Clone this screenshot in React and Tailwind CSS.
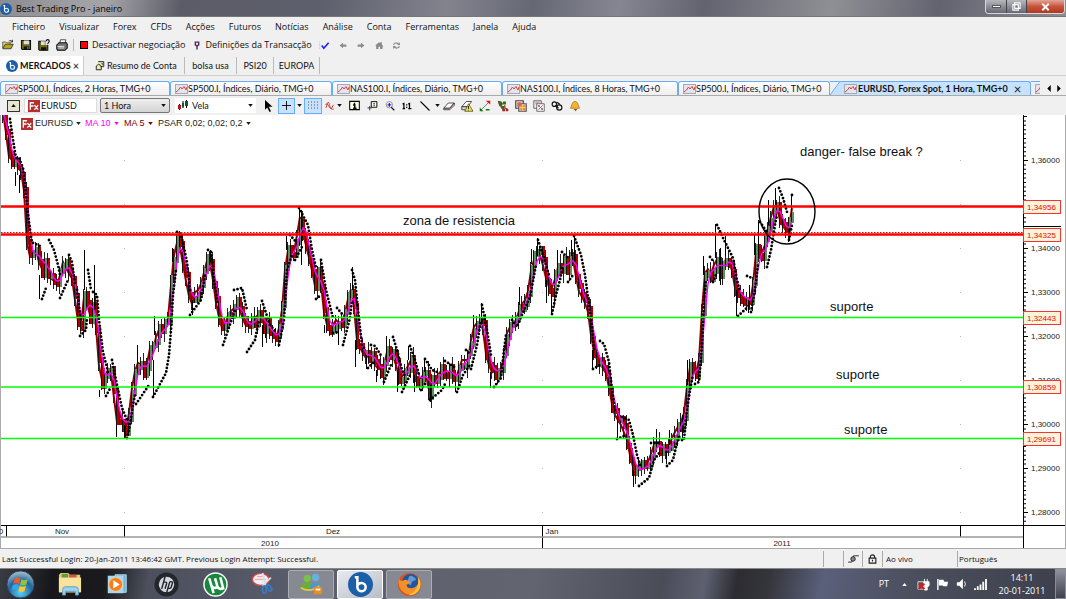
import React, { useState } from 'react';

const menuItems = ['Ficheiro', 'Visualizar', 'Forex', 'CFDs', 'Acções', 'Futuros', 'Notícias', 'Análise', 'Conta', 'Ferramentas', 'Janela', 'Ajuda'];

const chartTabs = [
  { label: 'SP500.I, Índices, 2 Horas, TMG+0', width: 'w-[170px]' },
  { label: 'SP500.I, Índices, Diário, TMG+0', width: 'w-[162px]' },
  { label: 'NAS100.I, Índices, Diário, TMG+0', width: 'w-[170px]' },
  { label: 'NAS100.I, Índices, 8 Horas, TMG+0', width: 'w-[176px]' },
  { label: 'SP500.I, Índices, Diário, TMG+0', width: 'w-[152px]' },
];

// close price path, in chart coordinates
const pricePath = [
  [2, 112], [6, 140], [9, 165], [13, 155], [17, 168], [21, 172], [24, 200], [25, 230], [27, 255], [31, 258], [36, 247], [40, 278], [43, 250], [46, 275],
  [52, 280], [57, 285], [62, 262], [67, 272], [72, 280], [76, 320], [80, 325], [84, 288], [88, 318], [92, 305], [94, 315], [97, 350],
  [99, 382], [103, 378], [108, 368], [112, 378], [114, 418], [117, 424], [120, 410], [123, 428], [126, 430], [129, 405], [132, 380], [136, 362],
  [140, 365], [144, 372], [148, 355], [150, 342], [153, 355], [156, 328], [160, 332], [165, 325], [168, 315], [171, 270], [174, 248],
  [177, 240], [180, 250], [183, 272], [187, 290], [190, 308], [194, 292], [198, 290], [202, 278], [205, 262], [208, 258], [212, 280],
  [216, 310], [221, 328], [224, 325], [228, 312], [232, 310], [237, 302], [240, 315], [246, 328], [252, 320], [258, 314], [262, 323],
  [268, 330], [276, 340], [281, 310], [284, 270], [286, 250], [290, 252], [294, 252], [296, 235], [299, 217], [302, 232], [306, 250],
  [310, 265], [314, 286], [318, 272], [321, 290], [324, 323], [330, 328], [335, 320], [340, 325], [345, 310], [349, 288], [352, 292],
  [355, 338], [360, 350], [365, 358], [370, 352], [375, 368], [382, 370], [386, 352], [391, 353], [395, 365], [399, 380], [405, 370],
  [410, 360], [414, 378], [420, 380], [424, 370], [428, 390], [434, 378], [441, 370], [448, 372], [455, 378], [461, 360], [467, 360],
  [472, 328], [476, 323], [481, 320], [484, 350], [490, 373], [496, 370], [502, 368], [505, 335], [510, 325], [515, 320], [520, 305],
  [526, 298], [531, 264], [536, 254], [540, 256], [544, 275], [549, 290], [553, 285], [556, 268], [561, 264], [566, 265], [571, 254],
  [574, 270], [577, 290], [583, 300], [588, 315], [591, 345], [595, 358], [600, 365], [606, 375], [610, 400], [614, 415], [620, 425],
  [626, 440], [630, 460], [634, 473], [638, 468], [643, 469], [648, 460], [653, 445], [657, 444], [661, 450], [666, 453], [670, 440],
  [675, 430], [680, 422], [684, 410], [687, 375], [689, 367], [693, 375], [697, 370], [699, 350], [701, 310], [703, 275], [706, 268],
  [711, 275], [715, 255], [719, 272], [726, 257], [730, 265], [735, 293], [738, 296], [744, 298], [749, 303], [752, 285], [755, 252],
  [760, 255], [764, 245], [768, 225], [772, 208], [775, 204], [778, 218], [783, 228], [787, 233], [791, 208], [793, 230],
];

const psar = [
  '10,119 13,140 16,158 19,158 23,168 26,195 29,222 32,243', '33,243 40,246', '49,240 54,250 58,265 60,275', '69,255 72,262 75,285',
  '88,270 91,290', '77,290 81,322', '42,299 46,288', '60,298 68,280', '93,292 97,295 99,320 103,352 108,372', '80,336 86,330 87,318',
  '112,360 117,385 122,408 127,420', '106,396 111,387', '127,438 130,425 133,405 135,395', '136,404 149,385',
  '153,397 166,373 169,355 171,330 173,295 176,270', '177,232 181,234 187,262 190,290', '190,315 201,300 205,275',
  '208,250 211,252 214,280 218,305', '223,345 235,310', '234,290 242,288 247,310', '247,352 255,340 259,320', '262,301 270,325 277,333',
  '279,345 284,320 287,270 292,255', '290,235 296,242', '295,260 303,245', '299,208 308,225 312,250 316,268', '321,260 326,290 333,318',
  '316,299 321,295', '337,308 343,315', '333,333 340,332', '343,345 350,318 352,300', '352,270 355,280 358,310 362,345 366,350',
  '371,345 375,346 382,357', '368,368 374,362', '384,382 391,365', '393,337 397,350 402,370 406,378', '402,392 410,375',
  '410,346 415,360 419,375', '425,359 432,370 437,372', '421,390 425,384', '430,400 442,390 446,382', '445,361 456,368',
  '457,392 463,375 470,365', '466,350 470,354', '471,369 477,345 481,320', '482,305 487,330 491,355', '494,387 501,378 504,350 506,335',
  '512,320 517,327 524,310 530,297 536,265', '538,240 544,258 549,275', '552,314 556,295 560,280 563,265', '562,252 568,258',
  '568,282 573,275', '574,236 581,255 585,275 589,305 592,325 594,350', '600,341 604,344 609,362 612,390 615,410', '593,369 600,365',
  '622,417 629,420 633,435 637,455 641,468', '617,439 624,436', '639,486 649,478 654,460 660,452', '651,443 661,443',
  '667,466 673,460 677,443 680,435', '682,440 684,440 687,410 690,390 693,375', '695,384 699,382 702,345 704,300 706,280',
  '710,257 714,262', '713,282 717,272', '717,225 724,240 733,258 737,280 740,292', '738,316 750,305', '747,276 752,278',
  '751,312 755,290 758,265', '760,222 767,232', '767,267 771,250 775,225 777,215', '779,188 783,198 787,212', '789,240 792,225', '792,195 794,196',
];

// long wicks that stick out of the candles
const spikes = [
  [15, 172, 186], [19, 175, 193], [39, 275, 299], [84, 250, 290], [94, 265, 310], [99, 390, 397], [116, 425, 437], [124, 425, 438], [137, 345, 365],
  [154, 316, 335], [153, 360, 398], [172, 248, 262], [179, 231, 246], [192, 300, 315], [210, 250, 262], [262, 325, 347], [265, 325, 338],
  [286, 236, 250], [299, 206, 222], [301, 210, 265], [324, 325, 333], [338, 325, 345], [352, 267, 290], [355, 340, 367], [366, 355, 369],
  [376, 370, 382], [386, 336, 355], [397, 370, 392], [414, 375, 392], [408, 346, 360], [430, 385, 402], [424, 358, 372], [455, 375, 392],
  [473, 315, 330], [481, 303, 325], [490, 372, 388], [519, 287, 305], [531, 249, 264], [537, 238, 256], [551, 285, 315], [546, 280, 303],
  [557, 250, 268], [571, 240, 256], [574, 234, 262], [592, 350, 368], [617, 420, 439], [633, 470, 487], [656, 429, 444], [666, 450, 464],
  [669, 430, 445], [682, 415, 438], [687, 360, 385], [703, 256, 275], [715, 224, 258], [720, 248, 285], [725, 236, 256], [736, 290, 316],
  [748, 300, 313], [754, 235, 255], [758, 220, 255], [768, 200, 225], [775, 188, 205], [789, 228, 241], [791, 194, 212], [749, 285, 300],
];

const buildCandles = () => {
  const candles = [];
  let seg = 0;
  let prev = pricePath[0][1];
  for (let x = 2; x <= 793; x += 3) {
    while (seg < pricePath.length - 2 && pricePath[seg + 1][0] < x) seg++;
    const [x0, y0] = pricePath[seg];
    const [x1, y1] = pricePath[seg + 1];
    const mid = y0 + ((y1 - y0) * (x - x0)) / (x1 - x0);
    const n = Math.sin(x * 12.9898) * 43758.5453;
    const r = n - Math.floor(n);
    const close = mid + (r - 0.5) * 14;
    candles.push({ x, mid, open: prev, close, high: Math.min(prev, close) - 3 - r * 9, low: Math.max(prev, close) + 3 + (1 - r) * 9 });
    prev = close;
  }
  return candles;
};

const candles = buildCandles();

const movingAverage = (size) =>
  candles
    .map((c, i) => {
      const part = candles.slice(Math.max(0, i - size + 1), i + 1);
      return `${c.x + 1},${(part.reduce((sum, p) => sum + p.mid, 0) / part.length).toFixed(1)}`;
    })
    .join(' ');

const levels = [
  { y: 206, price: '1,34956', color: '#ff0000', width: 2.4 },
  { y: 234, price: '1,34325', color: '#ff0000', width: 2.4 },
  { y: 317, price: '1,32443', color: '#00ff00', width: 1.6 },
  { y: 386.5, price: '1,30859', color: '#00ff00', width: 1.6 },
  { y: 438, price: '1,29691', color: '#00ff00', width: 1.6 },
];

const axisPrices = [
  ['1,36000', 160], ['1,34000', 248], ['1,33000', 292], ['1,32000', 336], ['1,31000', 380], ['1,30000', 424], ['1,29000', 468], ['1,28000', 512],
];

const notes = [
  ['danger- false break ?', 800, 156], ['zona de resistencia', 403, 225], ['suporte', 830, 311], ['suporte', 836, 379], ['suporte', 844, 434],
];

const Caret = ({ className = '' }) => (
  <svg viewBox="0 0 6 4" className={`h-[3px] w-[5px] shrink-0 ${className}`} fill="currentColor"><path d="M0 0h6L3 4z" /></svg>
);

const BrandIcon = ({ className }) => (
  <svg viewBox="0 0 24 24" className={className}>
    <circle cx="12" cy="12" r="12" fill="#1b5fa8" />
    <path d="M6.500 5H9v10a4 4 0 1 0 4-4.500c-2 0-3.400 1-4 2.500" fill="none" stroke="#fff" strokeWidth="2.400" />
  </svg>
);

const ChartIcon = () => (
  <svg viewBox="0 0 13 10" className="h-[10px] w-[13px] shrink-0">
    <rect x=".5" y=".5" width="12" height="9" fill="#e2e4ee" stroke="#a4a8b8" />
    <path d="M1 8l2.500-2 2-3 1.500 2 2-2.500L11 6l1-3" fill="none" stroke="#d44" />
  </svg>
);

const FxIcon = () => (
  <svg viewBox="0 0 13 13" className="h-[12px] w-[12px] shrink-0">
    <rect width="13" height="13" fill="#b5302c" />
    <path d="M2.500 10.500V3h4M2.500 6.500h3.500M7 5.500l4 5M11 5.500l-4 5" stroke="#fff" strokeWidth="1.400" fill="none" />
  </svg>
);

const toolbarIcons = {
  open: <><path d="M1 12V4h4l1 1h5v2" fill="#f4e36a" stroke="#333" /><path d="M1 13l3-6h11l-3 6z" fill="#b3a51c" stroke="#222" /><path d="M9 3c2-2 4-1 5 1M14 1v3h-3" fill="none" stroke="#111" /></>,
  save: <><path d="M2 2h12v12H3l-1-1z" fill="#6c6b16" stroke="#111" strokeWidth="1.500" /><path d="M5 2h7v5H5z" fill="#ddd" /><path d="M5 10h7v4H5z" fill="#111" /><path d="M10 11h1v2h-1z" fill="#fff" /></>,
  saveAs: <><path d="M1 3h12v12H2l-1-1z" fill="#6c6b16" stroke="#111" strokeWidth="1.500" /><path d="M4 3h5v5H4z" fill="#ddd" /><path d="M4 11h7v4H4z" fill="#111" /><path d="M10 1h5v7h-5z" fill="#eee" /><path d="M11 3c0-3 4-3 4 0 0 2-2 1-2 4" stroke="#111" strokeWidth="1.500" fill="none" /></>,
  print: <><path d="M5 6l1-5h7l-1 5z" fill="#fff" stroke="#222" /><path d="M1 8l3-3h10l1 2v5l-3 3H2l-1-2z" fill="#777" stroke="#111" strokeWidth="1.400" /><path d="M2 10h9M3 12h8" stroke="#fff" /></>,
  check: <><path d="M1 2v12" stroke="#aaa" strokeDasharray="1 1" /><path d="M4 8l3 4 7-8" fill="none" stroke="#2222ee" strokeWidth="2.500" /></>,
  back: <path d="M8 3L2 8l6 5v-3h6V6H8z" fill="#8b8b8b" />,
  forward: <path d="M8 3l6 5-6 5v-3H2V6h6z" fill="#8b8b8b" />,
  home: <path d="M1 8l7-6 2 2V2h3v4l2 2-1 6H3V8zM7 10v4h3v-4z" fill="#888" />,
  refresh: <><path d="M3 7c0-4 7-5 9-1M13 9c0 4-7 5-9 1" stroke="#888" strokeWidth="2" fill="none" /><path d="M14 2v5H9zM2 14V9h5z" fill="#888" /></>,
};

const drawIcons = {
  cursor: <path d="M4 0v13l3-3 3 6 2-1-3-6h5z" fill="#000" />,
  indicator: <path d="M1 11c2 0 2-9 4-9s3 10 5 10 1-4 4-6M1 6c3-4 4 1 6 4s4 3 7 3" fill="none" stroke="#c01818" strokeWidth="1.300" />,
  info: <><path d="M1 2h14v12H1z" fill="#ffffe8" stroke="#000" strokeWidth="1.500" /><path d="M8 4v2M6 7h2.500v4M6 12h5" stroke="#000" strokeWidth="2" /></>,
  note: <><path d="M6 1h9v9H6z" fill="#ffe" stroke="#000" strokeWidth="1.500" /><path d="M10.500 3v2M10.500 6v2" stroke="#222" strokeWidth="2" /><path d="M0 11h7M3.500 8v7" stroke="#333" strokeWidth="1.500" /></>,
  zoom: <><circle cx="7" cy="6" r="5" fill="#fff" stroke="#777" strokeWidth="1.300" /><path d="M7 3v6M4 6h6" stroke="#22e" strokeWidth="2" /><path d="M10 10l5 5" stroke="#111" strokeWidth="2" /></>,
  ratio: <path d="M1 5l2-1v8M1 12h4M10 5l2-1v8M10 12h5M7.500 5v2M7.500 9v2" fill="none" stroke="#000" strokeWidth="2" />,
  line: <path d="M2 2l12 12" stroke="#000" strokeWidth="1.500" />,
  eraser: <><path d="M1 11l6-7h8l-6 7z" fill="#fff" stroke="#222" /><path d="M1 11h8l6-7v3l-6 6H1z" fill="#f3c6c6" stroke="#222" /></>,
  eraserWarn: <><path d="M1 9l6-7h7l-5 7z" fill="#fff" stroke="#222" /><path d="M1 9h7v4H1z" fill="#ddd" stroke="#222" /><path d="M10 5l6 10H5z" fill="#f8e840" stroke="#443" /><path d="M10 8v4M10 13v1" stroke="#000" /></>,
  link: <><path d="M3 13L13 3" stroke="#555" /><path d="M9 1h6v5z" fill="#d11" /><path d="M1 10v5h5z" fill="#171" /><path d="M9 12h5v2H9z" fill="#171" /></>,
  trades: <><path d="M1 1l5 1 2 3-2 4-3-1zM8 2h4v4H8zM5 8h5v4H6z" fill="#187a18" /><path d="M2 3l4 4-1 3M10 7l1 4 3 1" stroke="#b22" strokeWidth="1.500" fill="none" /><path d="M7 12h4v3H7zM12 12h3v3h-3z" fill="#a22" /></>,
  copy: <><path d="M1 1h10v10H1z" fill="#eed" stroke="#533" strokeWidth="1.500" /><path d="M5 5h10v10H5z" fill="#cfd8e4" stroke="#556" strokeWidth="1.500" /><path d="M3 3h6v6H3z" fill="#c86a5a" /><path d="M7 7h7v7H7z" fill="#f0892a" /><path d="M10 6v8M6 10h8" stroke="#ffd98a" /></>,
  percent: <><path d="M1 1h10v10H1z" fill="#eee" stroke="#444" /><path d="M3 3h6M3 5h3" stroke="#c66" /><path d="M5 5h10v10H5z" fill="#fff" stroke="#444" /><path d="M7 13l6-6" stroke="#c22" /><path d="M7 7h2v2H7zM11 11h2v2h-2z" fill="#333" /></>,
  chain: <g fill="none" stroke="#111" strokeWidth="1.500"><circle cx="4.500" cy="5.500" r="3" /><circle cx="11" cy="10" r="3.500" /><path d="M6 7l4 4M8 3l4 3" /></g>,
  bell: <><path d="M8 2c4 0 4 5 6 9H2c2-4 2-9 6-9z" fill="#f5b52a" stroke="#a8701c" /><path d="M6 12h5l-2 3z" fill="#a42" /></>,
};

const ToolIcon = ({ children, label, className = 'h-3 w-3' }) => (
  <button aria-label={label} className="shrink-0">
    <svg viewBox="0 0 16 16" className={className}>{children}</svg>
  </button>
);

const TitleBar = () => (
  <header className="flex h-[17px] items-start justify-between border-b border-[#777] bg-[linear-gradient(100deg,#8c8d93_0%,#a5a5aa_10%,#5b5c67_17%,#5d5f6c_30%,#82838d_42%,#666874_50%,#858691_58%,#62636f_66%,#8f9095_78%,#62636f_88%,#8d8e94_100%)]">
    <h1 className="flex items-center gap-1 pt-[2px] font-['Open_Sans',sans-serif] text-[9px] leading-[13px] text-black">
      <BrandIcon className="h-3 w-3" />
      Best Trading Pro - janeiro
    </h1>
    <div className="mr-[1px] flex h-[14px] overflow-hidden rounded-b border border-t-0 border-[#d8d8dc]">
      <button aria-label="Minimizar" className="flex w-[21px] items-center justify-center border-r border-[#444] bg-gradient-to-b from-[#b7b8be] to-[#666874]">
        <span className="h-[3px] w-[9px] border border-[#555] bg-white" />
      </button>
      <button aria-label="Restaurar" className="flex w-[20px] items-center justify-center border-r border-[#444] bg-gradient-to-b from-[#b7b8be] to-[#666874]">
        <svg viewBox="0 0 10 10" className="h-[9px] w-[9px]"><path d="M3 1h6v6H3zM1 3h6v6H1z" fill="#777" stroke="#fff" strokeWidth="1.300" /></svg>
      </button>
      <button aria-label="Fechar" className="flex w-[37px] items-center justify-center bg-gradient-to-b from-[#e0a598] via-[#c8523a] to-[#b03a20]">
        <svg viewBox="0 0 10 10" className="h-[8px] w-[9px]"><path d="M1 1l8 8M9 1L1 9" stroke="#fff" strokeWidth="2.400" /></svg>
      </button>
    </div>
  </header>
);

const MainToolbar = () => (
  <div className="flex h-[18px] items-center font-['Open_Sans',sans-serif] text-[9px]">
    <div className="flex items-center gap-[6px] pl-[2px]">
      <ToolIcon label="Abrir">{toolbarIcons.open}</ToolIcon>
      <ToolIcon label="Guardar">{toolbarIcons.save}</ToolIcon>
      <ToolIcon label="Guardar como">{toolbarIcons.saveAs}</ToolIcon>
      <ToolIcon label="Imprimir">{toolbarIcons.print}</ToolIcon>
    </div>
    <span className="ml-[5px] h-3 w-px bg-[#bbb]" />
    <button className="ml-[6px] flex items-center gap-1 whitespace-nowrap">
      <span className="h-2 w-2 border border-black bg-[#f00]" />
      Desactivar negociação
    </button>
    <button className="ml-2 flex items-center gap-1 whitespace-nowrap">
      <svg viewBox="0 0 12 16" className="h-[9px] w-[8px]"><path d="M3 2h6v5L6 9 3 7zM6 9v6" fill="none" stroke="#502a5c" strokeWidth="2.500" /></svg>
      Definições da Transacção
    </button>
    <div className="flex items-center gap-[8px] pl-[7px]">
      <ToolIcon label="Confirmar" className="h-[11px] w-[11px]">{toolbarIcons.check}</ToolIcon>
      <ToolIcon label="Anterior" className="h-[9px] w-[10px]">{toolbarIcons.back}</ToolIcon>
      <ToolIcon label="Seguinte" className="h-[9px] w-[10px]">{toolbarIcons.forward}</ToolIcon>
      <ToolIcon label="Início" className="h-[9px] w-[10px]">{toolbarIcons.home}</ToolIcon>
      <ToolIcon label="Actualizar" className="h-[9px] w-[9px]">{toolbarIcons.refresh}</ToolIcon>
    </div>
  </div>
);

const WorkspaceTabs = () => (
  <nav className="flex h-[22px] items-stretch border-b border-[#cfcfcf] pt-[2px] whitespace-nowrap">
    <button className="flex w-[84px] items-center gap-[2px] border-r border-[#ccc] bg-white pl-[6px] font-bold">
      <BrandIcon className="h-3 w-3" />
      MERCADOS
      <span className="text-[11px] font-normal">×</span>
    </button>
    <button className="my-px flex w-[101px] items-center gap-[2px] border-r border-[#bbb] pl-[11px]">
      <svg viewBox="0 0 16 16" className="h-[10px] w-[10px]"><path d="M5 1h9v8H9M2 8l4-3 4 3v6H2zM11 3l1 3" fill="#f0e9b0" stroke="#222" strokeWidth="1.500" /></svg>
      Resumo de Conta
    </button>
    <button className="my-px w-[52px] border-r border-[#bbb]">bolsa usa</button>
    <button className="my-px w-[37px] border-r border-[#bbb]">PSI20</button>
    <button className="my-px w-[46px] border-r border-[#bbb]">EUROPA</button>
  </nav>
);

const ChartTabs = () => (
  <nav className="flex h-[20px] items-stretch border-b border-[#aaa] pt-[5px] whitespace-nowrap">
    {chartTabs.map((tab, i) => (
      <button key={i} className={`${tab.width} flex shrink-0 items-center rounded-t-[3px] border border-b-0 border-[#66adff] bg-gradient-to-b from-white to-[#eeeeee] pl-1`}>
        <ChartIcon />
        {tab.label}
      </button>
    ))}
    <svg viewBox="0 0 12 14" className="h-[14px] w-[12px] shrink-0">
      <path d="M0 .5h11" stroke="#66adff" />
      <path d="M0 14L10 0h2v14z" fill="#c6e2ff" />
      <path d="M0 14L10 .5h2" fill="none" stroke="#66adff" />
    </svg>
    <button className="flex w-[189px] shrink-0 items-center gap-px rounded-tr-[3px] border-t border-r border-[#66adff] bg-[#c6e2ff] pl-[2px] font-bold">
      <ChartIcon />
      EURUSD, Forex Spot, 1 Hora, TMG+0
      <span className="pl-[5px] text-[13px] font-normal">×</span>
    </button>
    <div className="flex w-[9px] items-center overflow-hidden border-t border-[#66adff] pl-1"><ChartIcon /></div>
    <div className="ml-auto flex gap-[6px] pr-[5px]">
      <button aria-label="Anterior"><svg viewBox="0 0 4 8" className="h-[7px] w-[4px]"><path d="M4 0v8L0 4z" /></svg></button>
      <button aria-label="Seguinte"><svg viewBox="0 0 4 8" className="h-[7px] w-[4px]"><path d="M0 0v8l4-4z" /></svg></button>
    </div>
  </nav>
);

const ChartToolbar = ({ symbol, setSymbol }) => (
  <div className="flex h-[19px] items-center pl-[7px]">
    <button aria-label="Recolher" className="flex h-3 w-[13px] items-center justify-center border border-[#333] bg-[#e9e4cf]">
      <Caret className="rotate-180" />
    </button>
    <label className="ml-[4px] flex h-[15px] w-[73px] items-center gap-px border border-[#ddd] bg-white pl-[3px]">
      <FxIcon />
      <input aria-label="Símbolo" className="w-full min-w-0 bg-transparent outline-none" value={symbol} onChange={(e) => setSymbol(e.target.value)} />
    </label>
    <div className="relative ml-[3px] h-[15px] w-[70px]">
      <select aria-label="Período" className="block h-full w-full appearance-none rounded-[2px] border border-[#777] bg-gradient-to-b from-[#eee] to-[#d4d4d4] pl-[3px]">
        <option>1 Hora</option>
        <option>2 Horas</option>
      </select>
      <Caret className="pointer-events-none absolute top-[6px] right-[4px]" />
    </div>
    <div className="relative ml-[5px] h-[15px] w-[81px] bg-white">
      <select aria-label="Tipo de gráfico" className="block h-full w-full appearance-none pl-[17px]">
        <option>Vela</option>
        <option>Barra</option>
      </select>
      <svg viewBox="0 0 10 10" className="pointer-events-none absolute top-[2px] left-[3px] h-[10px] w-[10px]">
        <path d="M1.500 4v6M5 1v7M8.500 0v8" stroke="#000" /><path d="M0 5h3v4H0z" fill="#b11" /><path d="M4 3h2v4H4zM7 1h3v5H7z" fill="#153" />
      </svg>
      <Caret className="pointer-events-none absolute top-[6px] right-[3px]" />
    </div>
    <div className="ml-[6px] flex items-center">
      <ToolIcon label="Cursor">{drawIcons.cursor}</ToolIcon>
      <button aria-label="Mira" className="ml-[4px] flex h-4 w-[17px] items-center justify-center border border-[#66adff] bg-[#c6e2ff]">
        <svg viewBox="0 0 10 10" className="h-[9px] w-[9px]"><path d="M5 0v10M0 5h10" stroke="#000" /></svg>
      </button>
      <Caret className="ml-[2px]" />
      <button aria-label="Grelha" className="ml-[2px] flex h-4 w-[18px] items-center justify-center border border-[#66adff] bg-[#c6e2ff]">
        <svg viewBox="0 0 10 10" className="h-[10px] w-[10px]"><path d="M0 1h10M0 4h10M0 7h10" stroke="#555" strokeDasharray="1 2" /></svg>
      </button>
    </div>
    <div className="ml-[3px] flex items-center gap-[7px]">
      <span className="flex items-center gap-[2px]"><ToolIcon label="Indicadores" className="h-[10px] w-[10px]">{drawIcons.indicator}</ToolIcon><Caret /></span>
      <ToolIcon label="Informação" className="h-[11px] w-[11px]">{drawIcons.info}</ToolIcon>
      <ToolIcon label="Nota" className="h-[10px] w-[11px]">{drawIcons.note}</ToolIcon>
      <ToolIcon label="Ampliar" className="h-[10px] w-[10px]">{drawIcons.zoom}</ToolIcon>
      <ToolIcon label="Escala 1:1" className="h-[10px] w-[10px]">{drawIcons.ratio}</ToolIcon>
      <span className="flex items-center gap-[4px]"><ToolIcon label="Linha">{drawIcons.line}</ToolIcon><Caret /></span>
    </div>
    <div className="ml-[3px] flex items-center gap-[6px]">
      <ToolIcon label="Apagar">{drawIcons.eraser}</ToolIcon>
      <ToolIcon label="Apagar tudo">{drawIcons.eraserWarn}</ToolIcon>
      <ToolIcon label="Ligar">{drawIcons.link}</ToolIcon>
      <ToolIcon label="Negócios">{drawIcons.trades}</ToolIcon>
      <ToolIcon label="Copiar">{drawIcons.copy}</ToolIcon>
      <ToolIcon label="Percentagem">{drawIcons.percent}</ToolIcon>
      <ToolIcon label="Associar">{drawIcons.chain}</ToolIcon>
      <ToolIcon label="Alerta">{drawIcons.bell}</ToolIcon>
    </div>
  </div>
);

const PriceChart = () => (
  <svg viewBox="0 115 1066 434" className="block w-full bg-white font-['Liberation_Sans',sans-serif]">
    {[124, 542, 960].map((x) => (
      <path key={x} d={`M${x + 0.5} 160V525`} stroke="#bbb" strokeDasharray="1 43" />
    ))}

    <polyline points={movingAverage(1)} fill="none" stroke="#900000" strokeWidth="2" />
    <g shapeRendering="crispEdges">
      {candles.map((c) => (
        <g key={c.x}>
          <path d={`M${c.x + 0.5} ${c.high}V${c.low}`} stroke="#222" />
          <rect x={c.x} y={Math.min(c.open, c.close) - 3} width="1" height={Math.abs(c.open - c.close) + 6} fill="#1a1010" />
          <rect x={c.x + 1} y={Math.min(c.open, c.close) - 3} width="2" height={Math.abs(c.open - c.close) + 6} fill={c.close > c.open ? '#b40000' : '#5f8f5f'} />
        </g>
      ))}
      {spikes.map(([x, y1, y2]) => (
        <path key={`${x}-${y1}`} d={`M${x + 0.5} ${y1}V${y2}`} stroke="#000" />
      ))}
    </g>
    <polyline points={movingAverage(3)} fill="none" stroke="#ff00ff" strokeWidth="1.400" />
    {psar.map((points) => (
      <polyline key={points} points={points} fill="none" stroke="#000" strokeWidth="2.800" strokeLinecap="round" strokeDasharray="0 3.600" />
    ))}

    {levels.map((l) => (
      <path key={l.price} d={`M1 ${l.y + 0.5}H1023`} stroke={l.color} strokeWidth={l.width} />
    ))}
    <path d="M1 232.500H1023" stroke="#e00" strokeDasharray="1.500 1.500" />
    <ellipse cx="787" cy="211.500" rx="28" ry="32.500" fill="none" stroke="#000" strokeWidth="1.400" />

    {notes.map(([text, x, y]) => (
      <text key={y} x={x} y={y} fontSize="13" fill="#111">{text}</text>
    ))}

    {/* price axis */}
    <path d="M1023.500 115V548M1023 116.500h4" stroke="#000" fill="none" />
    <path d="M1025 116V523" stroke="#000" strokeWidth="2" strokeDasharray="1 3.400" />
    {axisPrices.map(([price, y]) => (
      <g key={price}>
        <path d={`M1023 ${y + 0.5}h5`} stroke="#000" />
        <text x="1031" y={y + 3} fontSize="8" fill="#222">{price}</text>
      </g>
    ))}
    <path d="M1023 226.500h38" stroke="#000" />
    {levels.map((l) => (
      <g key={l.price}>
        <rect x="1023.500" y={Math.floor(l.y) - 5.5} width="37" height="13" fill="#f5f5dc" stroke="#ff3030" />
        <text x="1027" y={Math.floor(l.y) + 4} fontSize="8" fill="#f00">{l.price}</text>
      </g>
    ))}

    {/* time axis */}
    <path d="M1 525.500H1066M6.500 525V537M124.500 525V537M542.500 525V548M960.500 525V537" stroke="#000" />
    <path d="M1 537H1023" stroke="#999" strokeWidth="1.500" />
    <path d="M0 548.500H1066M.5 115V548M1065.500 115V548" stroke="#aaa" />
    <g fontSize="8" fill="#222" textAnchor="middle">
      <text x="1" y="534">0</text>
      <text x="62" y="534">Nov</text>
      <text x="333" y="534">Dez</text>
      <text x="552" y="534">Jan</text>
      <text x="270" y="546">2010</text>
      <text x="782" y="546">2011</text>
    </g>
  </svg>
);

const ChartLegend = () => (
  <div className="absolute top-[2px] left-[21px] flex items-center font-['Liberation_Sans',sans-serif] text-[9px] leading-[13px] whitespace-nowrap text-[#222]">
    <button className="flex w-[64px] items-center gap-[2px]"><FxIcon />EURUSD<Caret className="ml-px" /></button>
    <button className="flex w-[39px] items-center gap-[3px] text-[#f0f]">MA 10<Caret /></button>
    <button className="flex w-[34px] items-center gap-[3px] text-[#800000]">MA 5<Caret /></button>
    <button className="flex items-center gap-[3px]">PSAR 0,02; 0,02; 0,2<Caret /></button>
  </div>
);

const StatusBar = () => (
  <footer className="flex h-[20px] items-center border-b border-[#888] pl-[2px] font-['Open_Sans',sans-serif] text-[8px] whitespace-nowrap">
    <span className="flex-1">Last Successful Login: 20-Jan-2011 13:46:42 GMT. Previous Login Attempt: Successful.</span>
    <span className="h-4 w-[20px] border-l border-[#aaa]" />
    <span className="flex h-4 w-[19px] items-center justify-center border-l border-[#aaa]">
      <svg viewBox="0 0 14 10" className="h-[9px] w-[13px]"><path d="M1 9h4l2-7h6" fill="none" stroke="#222" /><circle cx="6.500" cy="5.500" r="2.500" fill="#888" stroke="#222" /></svg>
    </span>
    <span className="flex h-4 w-[20px] items-center justify-center border-l border-[#aaa]">
      <svg viewBox="0 0 10 12" className="h-[10px] w-[9px]"><path d="M2.500 5V3.500a2.500 2.500 0 0 1 5 0V5M1 5h8v6H1zM5 7v2" fill="none" stroke="#222" strokeWidth="1.400" /></svg>
    </span>
    <span className="flex h-4 w-[75px] items-center border-l border-[#aaa] pl-[3px]">Ao vivo</span>
    <span className="flex h-4 w-[109px] items-center border-l border-[#aaa] pl-[1px]">Português</span>
  </footer>
);

const Taskbar = () => (
  <footer className="flex h-[30px] items-center bg-[linear-gradient(100deg,#3a3c44_0%,#17171b_5%,#1a1a1e_10%,#4c4f5c_14%,#5b5f6d_30%,#62656f_50%,#4a4c58_62%,#5d6070_66%,#2c2c32_69%,#35353c_72%,#5a607a_77%,#4b4f5e_85%,#3d404b_100%)] font-['Open_Sans',sans-serif] text-white">
    <div className="flex items-center gap-[22px] pl-[6px]">
      <button aria-label="Iniciar">
        <svg viewBox="0 0 30 30" className="h-[29px] w-[29px]">
          <defs>
            <radialGradient id="orb" cx="50%" cy="80%" r="75%"><stop offset="0" stopColor="#58d0f5" /><stop offset=".6" stopColor="#23659c" /><stop offset="1" stopColor="#9db8cc" /></radialGradient>
          </defs>
          <circle cx="15" cy="15" r="14" fill="url(#orb)" stroke="#2a4660" />
          <path d="M9 9c2-1.500 4-1.500 6 0l-1.500 5.500c-2-1.500-4-1.500-6 0z" fill="#ee5a28" />
          <path d="M16 9.500c2 1.200 4 1.200 6.500 0L21 15c-2 1.200-4.500 1.200-6.500 0z" fill="#8cc63f" />
          <path d="M7.200 15.800c2-1.400 4-1.400 6 0L11.700 21c-2-1.300-4-1.300-6 0z" fill="#3aa5e8" />
          <path d="M14.200 16.300c2 1.200 4 1.200 6.500 0l-1.500 5.300c-2 1.200-4.500 1.200-6.500 0z" fill="#fcc62c" />
        </svg>
      </button>
      <button aria-label="Explorador">
        <svg viewBox="0 0 28 26" className="h-[24px] w-[26px]">
          <path d="M2 3l2-2h8l2 2h11v19H2z" fill="#e8c868" /><path d="M5 2h7v5H5z" fill="#5a9c4c" /><path d="M13 3h8v4h-8z" fill="#c95a4a" /><path d="M2 6h24v16H2z" fill="#f8e39c" />
          <path d="M6 25v-6q0-3 3-3h11q3 0 3 3v6h-3v-4H9v4z" fill="#9cd2ee" stroke="#5a9cc4" />
        </svg>
      </button>
      <button aria-label="Leitor multimédia">
        <svg viewBox="0 0 26 26" className="h-[24px] w-[24px]"><path d="M11 3h12v19H11z" fill="#72b8dc" stroke="#b8e0f0" /><path d="M3 4h17v19H3z" fill="#a8d8ee" /><circle cx="11.500" cy="13.500" r="7.500" fill="#f28020" stroke="#fbd0a0" /><path d="M9 9l7 4.500L9 18z" fill="#fff" /></svg>
      </button>
      <button aria-label="HP" className="ml-[3px]">
        <svg viewBox="0 0 26 26" className="h-[25px] w-[25px]"><circle cx="13" cy="13" r="12.500" fill="#23272c" /><circle cx="13" cy="13" r="8" fill="#d5dade" /><path d="M11.500 5L8 17.500M10.500 10.500h1.500q1.500 0 1 2L11.500 17.500M16.500 10L13 22M16.500 10h1.500q1.500 0 1 2l-1 3.500q-.5 1.500-2 1.500h-1" fill="none" stroke="#23272c" strokeWidth="1.500" /></svg>
      </button>
      <button aria-label="µTorrent" className="ml-[2px]">
        <svg viewBox="0 0 26 26" className="h-[25px] w-[25px]"><circle cx="13" cy="13" r="12" fill="#18863c" stroke="#fff" strokeWidth="1.500" /><path d="M6.500 6.500L11 22M9 14.500c2 3.500 6.500 2.500 5.500-1.500l-2-6.500M14.500 14c1.500 4 4 4 6.500 3L18 5.500" fill="none" stroke="#fff" strokeWidth="2.700" /></svg>
      </button>
      <button aria-label="Recorte">
        <svg viewBox="0 0 26 26" className="h-[24px] w-[25px]"><ellipse cx="11" cy="8" rx="9" ry="6.500" fill="#eee" stroke="#d34545" strokeWidth="1.500" /><path d="M5 8h12M7 5h8" stroke="#e99" /><path d="M13 1l4 15M22 6l-9 9" stroke="#dde" strokeWidth="2" /><ellipse cx="15" cy="19" rx="2" ry="4" fill="none" stroke="#3a7ac4" strokeWidth="2" /><ellipse cx="20" cy="17" rx="2" ry="4" fill="none" stroke="#3a7ac4" strokeWidth="2" transform="rotate(-35 20 17)" /></svg>
      </button>
    </div>
    <div className="ml-[13px] flex gap-[3px]">
      <button aria-label="Messenger" className="flex h-[29px] w-[46px] items-center justify-center rounded-[2px] border border-[#aaadb4] bg-[#868992]">
        <svg viewBox="0 0 26 26" className="h-[24px] w-[26px]"><circle cx="9" cy="7" r="4" fill="#7cbf4a" /><path d="M1 19q1-8 8-8t8 8z" fill="#6cae3c" /><circle cx="18" cy="6" r="4" fill="#6ab0de" /><path d="M11 19q1-8 7-8t7 8z" fill="#4b98cc" /><path d="M2 17q10 6 20-2" fill="none" stroke="#e9c548" strokeWidth="2" /><path d="M16 16h9v8h-9z" fill="#ee8a22" /><path d="M18 18h5v2h-5z" fill="#fff" /></svg>
      </button>
      <button aria-label="Best Trading Pro" className="flex h-[29px] w-[46px] items-center justify-center rounded-[2px] border border-white bg-gradient-to-br from-[#e8eaee] to-[#b9bdc6]">
        <BrandIcon className="h-[25px] w-[25px]" />
      </button>
      <button aria-label="Firefox" className="flex h-[29px] w-[46px] items-center justify-center rounded-[2px] border border-[#aaadb4] bg-[#868992]">
        <svg viewBox="0 0 26 26" className="h-[25px] w-[25px]"><circle cx="13" cy="13" r="12" fill="#d9531a" /><circle cx="14" cy="10.500" r="8.500" fill="#25539c" /><path d="M13 4q5 0 7 4l-4 2-2 4-4-3z" fill="#5d9ad6" /><path d="M2 7q1 3 4 2 3-2 5 0l3 1q-1 3-4 3 0 4 5 4 7-1 8-9 3 6-1 11-6 7-14 3-8-5-6-15z" fill="#f2912a" /><path d="M22 5q5 8 0 15-5 5-10 4 8-3 10-11z" fill="#f8c43a" /></svg>
      </button>
    </div>
    <div className="ml-auto flex items-center text-[9px]">
      <span>PT</span>
      <Caret className="ml-[13px] rotate-180" />
      <svg viewBox="0 0 14 14" className="ml-[10px] h-[13px] w-[13px]"><path d="M1 4h6v8H1z" fill="#555" stroke="#ddd" /><path d="M8 1v3M11 1v3M7 4h6v4l-2 2v3H8v-3" fill="#fff" stroke="#fff" /><path d="M2 6l6 6M8 6l-6 6" stroke="#e01818" strokeWidth="2" /></svg>
      <svg viewBox="0 0 14 14" className="ml-[6px] h-[13px] w-[13px]"><path d="M2 1v12" stroke="#fff" strokeWidth="1.500" /><path d="M3 2h5l1 2h4l-1 5H8L7 8H3z" fill="#fff" /></svg>
      <svg viewBox="0 0 14 14" className="ml-[7px] h-[12px] w-[12px]"><path d="M1 5h3l4-4v12L4 9H1z" fill="#fff" /><path d="M10 4q2 3 0 6" fill="none" stroke="#fff" /></svg>
      <svg viewBox="0 0 14 12" className="ml-[6px] h-[11px] w-[13px]"><path d="M0 10h2v2H0zM3 8h2v4H3zM6 6h2v6H6zM9 3h2v9H9zM12 0h2v12h-2z" fill="#fff" /></svg>
      <time className="w-[68px] pl-[2px] text-center leading-[13px]">14:11<br />20-01-2011</time>
      <button aria-label="Mostrar ambiente de trabalho" className="h-[30px] w-[11px] border border-[#8a8d98] bg-gradient-to-b from-[#8f929c] to-[#40434e]" />
    </div>
  </footer>
);

const App = () => {
  const [symbol, setSymbol] = useState('EURUSD');

  return (
    <div className="min-h-screen overflow-x-hidden bg-[#f0f0f0] font-['Lato',sans-serif] text-[9px] leading-[12px] text-[#111]">
      <TitleBar />
      <nav className="flex h-[19px] items-center gap-[14px] pl-3 font-['Open_Sans',sans-serif]">
        {menuItems.map((item) => (
          <button key={item}>{item}</button>
        ))}
      </nav>
      <MainToolbar />
      <WorkspaceTabs />
      <ChartTabs />
      <ChartToolbar symbol={symbol} setSymbol={setSymbol} />
      <main className="relative">
        <PriceChart />
        <ChartLegend />
      </main>
      <StatusBar />
      <Taskbar />
    </div>
  );
};

export default App;
